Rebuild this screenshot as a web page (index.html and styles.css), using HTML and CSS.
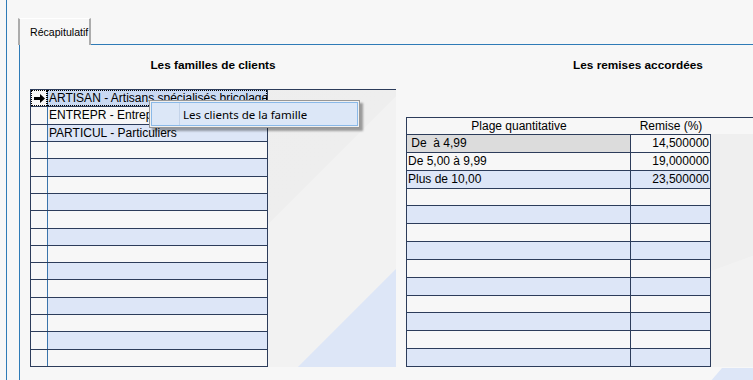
FILE: index.html
```html
<!DOCTYPE html>
<html lang="fr">
<head>
    <meta charset='utf-8'>
    <title>Récapitulatif</title>
    <link rel="stylesheet" href="styles.css">
</head>
<body>

<div class="window">
    <div class="tabs">
        <div class="tab">Récapitulatif</div>
        <div class="tab-rest"></div>
    </div>

    <div class="panel">
        <section class="col col-familles">
            <h2>Les familles de clients</h2>
            <div class="famgrid">
                <div class="ftable">
                    <div class="frow sel">
                        <div class="ind focus">
                            <svg width="11" height="9" viewBox="0 0 11 9"><path d="M0 3h6V0l5 4.5L6 9V6H0z" fill="#000"/></svg>
                        </div>
                        <div class="fcell focus">ARTISAN - Artisans spécialisés bricolage</div>
                    </div>
                    <div class="frow"><div class="ind"></div><div class="fcell">ENTREPR - Entreprises</div></div>
                    <div class="frow"><div class="ind"></div><div class="fcell">PARTICUL - Particuliers</div></div>
                    <div class="frow"><div class="ind"></div><div class="fcell"></div></div>
                    <div class="frow"><div class="ind"></div><div class="fcell"></div></div>
                    <div class="frow"><div class="ind"></div><div class="fcell"></div></div>
                    <div class="frow"><div class="ind"></div><div class="fcell"></div></div>
                    <div class="frow"><div class="ind"></div><div class="fcell"></div></div>
                    <div class="frow"><div class="ind"></div><div class="fcell"></div></div>
                    <div class="frow"><div class="ind"></div><div class="fcell"></div></div>
                    <div class="frow"><div class="ind"></div><div class="fcell"></div></div>
                    <div class="frow"><div class="ind"></div><div class="fcell"></div></div>
                    <div class="frow"><div class="ind"></div><div class="fcell"></div></div>
                    <div class="frow"><div class="ind"></div><div class="fcell"></div></div>
                    <div class="frow"><div class="ind"></div><div class="fcell"></div></div>
                    <div class="frow"><div class="ind"></div><div class="fcell"></div></div>
                </div>

                <div class="ctxmenu">
                    <div class="ctxitem">
                        <span class="gutter"></span>
                        <span class="label">Les clients de la famille</span>
                    </div>
                </div>
            </div>
        </section>

        <section class="col col-remises">
            <h2>Les remises accordées</h2>
            <div class="remgrid">
                <div class="rhead">
                    <div class="rh rh-plage">Plage quantitative</div>
                    <div class="rh rh-remise">Remise (%)</div>
                </div>
                <div class="rbody">
                    <div class="rtable">
                        <div class="rrow cur"><div class="rc1"> De  à 4,99</div><div class="rc2">14,500000</div></div>
                        <div class="rrow"><div class="rc1">De 5,00 à 9,99</div><div class="rc2">19,000000</div></div>
                        <div class="rrow"><div class="rc1">Plus de 10,00</div><div class="rc2">23,500000</div></div>
                        <div class="rrow"><div class="rc1"></div><div class="rc2"></div></div>
                        <div class="rrow"><div class="rc1"></div><div class="rc2"></div></div>
                        <div class="rrow"><div class="rc1"></div><div class="rc2"></div></div>
                        <div class="rrow"><div class="rc1"></div><div class="rc2"></div></div>
                        <div class="rrow"><div class="rc1"></div><div class="rc2"></div></div>
                        <div class="rrow"><div class="rc1"></div><div class="rc2"></div></div>
                        <div class="rrow"><div class="rc1"></div><div class="rc2"></div></div>
                        <div class="rrow"><div class="rc1"></div><div class="rc2"></div></div>
                        <div class="rrow"><div class="rc1"></div><div class="rc2"></div></div>
                        <div class="rrow"><div class="rc1"></div><div class="rc2"></div></div>
                    </div>
                    <div class="rfill"></div>
                </div>
            </div>
        </section>
    </div>
</div>

</body>
</html>
```

FILE: styles.css
```css
html, body {
    margin: 0;
    height: 100%;
}

body {
    background: #f7f7f7;
    font-family: "Liberation Sans", Arial, sans-serif;
    font-size: 12px;
    color: #000;
    overflow: hidden;
}

.window {
    margin-left: 6px;
    border-left: 1px solid #2f7bb7;
    height: 380px;
    padding: 18px 0 0 11px;
    box-sizing: border-box;
    display: flex;
    flex-direction: column;
}

/* tab strip */
.tabs {
    display: flex;
    height: 27px;
}

.tab {
    width: 59px;
    padding: 7px 0 0 10px;
    border-left: 2px solid #acacac;
    border-right: 2px solid #acacac;
    border-top: 1px solid #ffffff;
    font-size: 10.6px;
    line-height: 13px;
    white-space: nowrap;
}

.tab-rest {
    flex: 1;
    border-bottom: 1px solid #2f7bb7;
}

.panel {
    flex: 1;
    min-width: 0;
    margin-left: 1px;
    border-left: 1px solid #2f7bb7;
    padding: 12px 0 0 10px;
    display: flex;
    gap: 10px;
}

.col h2 {
    margin: 0;
    height: 16px;
    font-size: 11.8px;
    line-height: 16px;
    font-weight: bold;
    text-align: center;
}

.col-familles {
    width: 366px;
    flex-shrink: 0;
}

.col-remises {
    flex: 1;
    min-width: 0;
}

.col-remises h2 {
    padding-left: 117px;
}

/* families grid */
.famgrid {
    position: relative;
    margin-top: 16px;
    height: 277px;
    border-top: 1px solid #2c3c5a;
    background: linear-gradient(135deg, #ededed 0%, #eeeeee 57.8%, #f2f2f2 58%, #f2f2f2 84.7%, #dde6f7 84.8%);
}

.ftable {
    width: 238px;
    height: 100%;
    display: flex;
    flex-direction: column;
    border-left: 1px solid #2c3c5a;
    border-right: 1px solid #2c3c5a;
    box-sizing: border-box;
}

.frow {
    flex: 1;
    display: flex;
    min-height: 0;
    border-bottom: 1px solid #2c3c5a;
    background: #f7f7f7;
}

.frow:nth-child(odd) {
    background: #dde6f7;
}

.frow.sel {
    background: #c9d9f2;
}

.ind {
    width: 16px;
    background: #f7f7f7;
    display: flex;
    align-items: center;
    justify-content: center;
    box-sizing: border-box;
}

.fcell {
    flex: 1;
    min-width: 0;
    border-left: 1px solid #3a74ab;
    padding-left: 1px;
    display: flex;
    align-items: center;
    white-space: nowrap;
    overflow: hidden;
}

.focus {
    outline: 1px dotted #000;
    outline-offset: -1px;
}

/* context menu */
.ctxmenu {
    position: absolute;
    left: 119px;
    top: 10px;
    width: 207px;
    height: 24px;
    padding: 1px;
    background: #f0f0f0;
    border: 1px solid #979797;
    box-shadow: 3px 3px 2px rgba(0, 0, 0, 0.35);
}

.ctxitem {
    height: 100%;
    display: flex;
    align-items: center;
    background: #dce7f7;
    border: 1px solid #8ab9e8;
    box-sizing: border-box;
}

.ctxitem .gutter {
    width: 27px;
    height: 100%;
    border-right: 1px solid #c4d4ea;
}

.ctxitem .label {
    padding-left: 3px;
    font-family: "Noto Sans", "Open Sans", sans-serif;
    font-size: 11.5px;
}

/* discounts grid */
.remgrid {
    margin-top: 44px;
}

.rhead {
    display: flex;
    height: 16px;
    border-top: 1px solid #2c3c5a;
    border-left: 1px solid #2c3c5a;
    background: #f7f7f7;
}

.rh {
    text-align: center;
    line-height: 16px;
}

.rh-plage {
    width: 224px;
}

.rh-remise {
    width: 80px;
}

.rbody {
    position: relative;
    display: flex;
    height: 233px;
}

.rbody::after {
    content: "";
    position: absolute;
    right: 0;
    top: 234px;
    width: 43px;
    height: 14px;
    background: #dde6f7;
    clip-path: polygon(12px 0, 100% 0, 100% 100%, 0 100%);
}

.rtable {
    width: 305px;
    display: flex;
    flex-direction: column;
    border-top: 1px solid #2c3c5a;
    border-left: 1px solid #2c3c5a;
    border-right: 1px solid #2c3c5a;
    box-sizing: border-box;
}

.rrow {
    flex: 1;
    display: flex;
    min-height: 0;
    border-bottom: 1px solid #2c3c5a;
    background: #f7f7f7;
}

.rrow:nth-child(odd) {
    background: #dde6f7;
}

.rrow .rc1 {
    width: 224px;
    border-right: 1px solid #2c3c5a;
    padding-left: 1px;
    display: flex;
    align-items: center;
    white-space: pre;
    box-sizing: border-box;
}

.rrow .rc2 {
    flex: 1;
    padding-right: 1px;
    display: flex;
    align-items: center;
    justify-content: flex-end;
}

.rrow.cur {
    background: #f7f7f7;
}

.rrow.cur .rc1 {
    background: #dcdcdc;
}

.rfill {
    flex: 1;
    background: linear-gradient(160deg, #efefef 0%, #efefef 55%, #f2f2f2 55.3%, #f2f2f2 100%);
}
```
